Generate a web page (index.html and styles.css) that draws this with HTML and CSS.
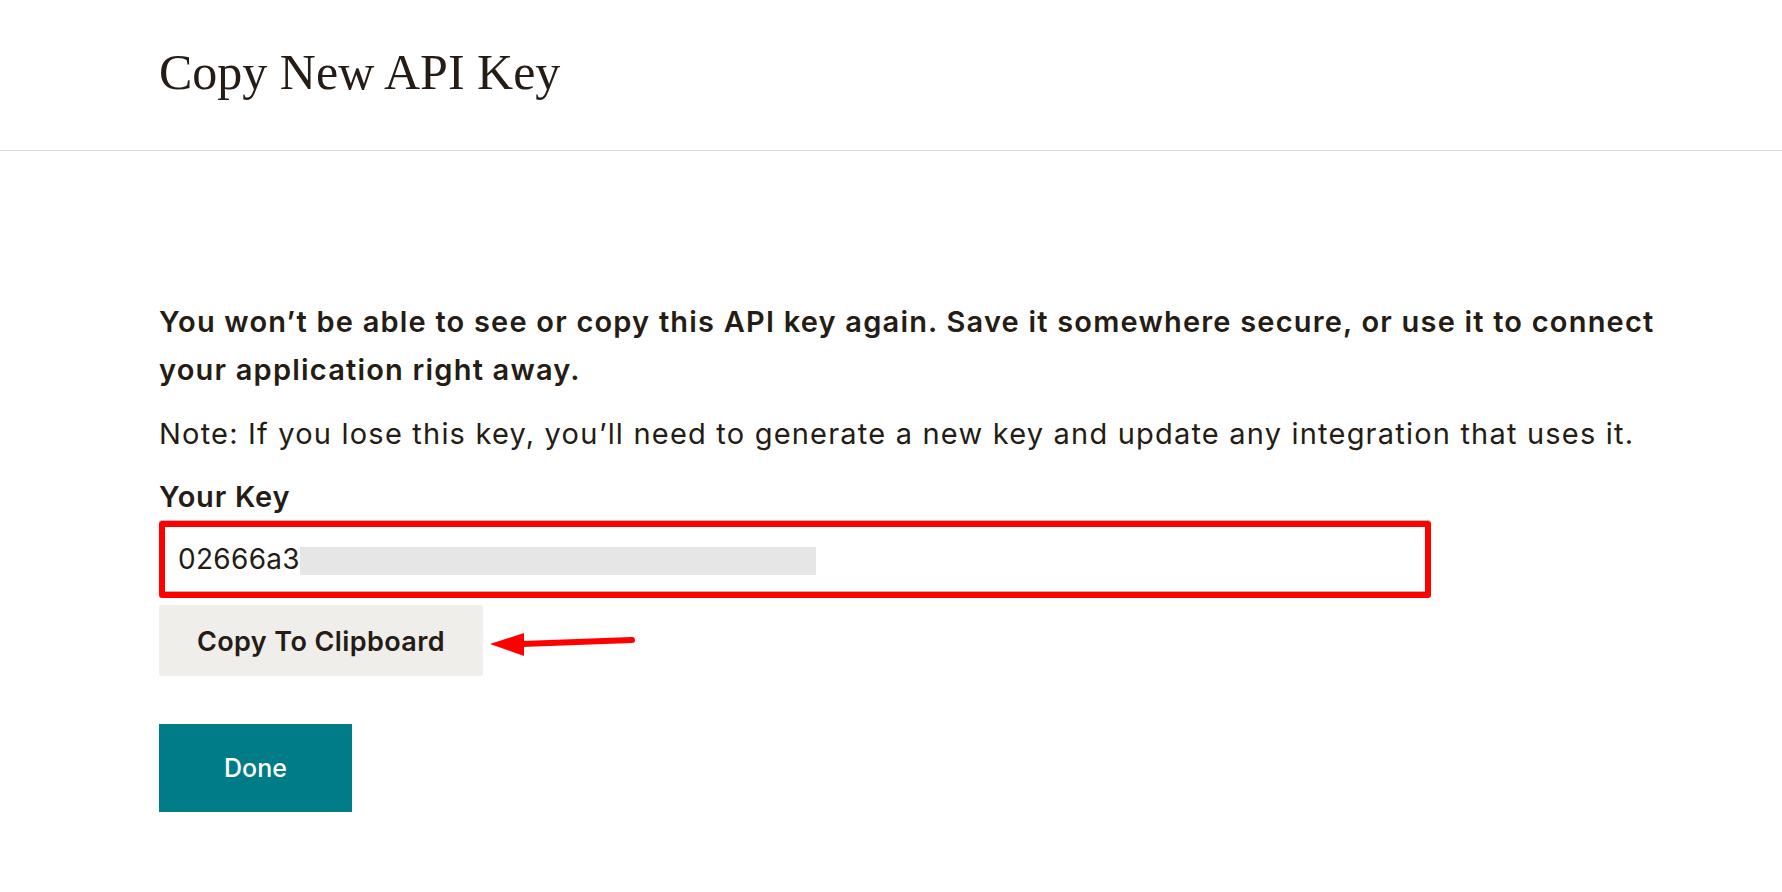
FILE: index.html
```html
<!DOCTYPE html>
<html lang="en">
<head>
<meta charset="utf-8">
<title>Copy New API Key</title>
<link rel="stylesheet" href="styles.css">
</head>
<body>
  <header class="page-header">
    <h1 class="page-title">Copy New API Key</h1>
  </header>
  <main class="content">
    <p class="warning">You won’t be able to see or copy this API key again. Save it somewhere secure, or use it to connect your application right away.</p>
    <p class="note">Note: If you lose this key, you’ll need to generate a new key and update any integration that uses it.</p>
    <label class="key-label">Your Key</label>
    <div class="key-field">
      <span class="key-text">02666a3</span><span class="key-mask"></span>
    </div>
    <div class="copy-row">
      <button class="btn-copy" type="button">Copy To Clipboard</button>
      <svg class="arrow" width="150" height="26" viewBox="0 0 150 26" aria-hidden="true">
        <polygon points="0,12 34,1 34,24" fill="#ff0000"/>
        <line x1="32" y1="12" x2="142" y2="8" stroke="#ff0000" stroke-width="6" stroke-linecap="round"/>
      </svg>
    </div>
    <button class="btn-done" type="button">Done</button>
  </main>
</body>
</html>
```
FILE: styles.css
```css
html, body {
  margin: 0;
  padding: 0;
  background: #ffffff;
}

body {
  font-family: "Inter", "Liberation Sans", sans-serif;
  color: #241c15;
}

.page-header {
  height: 151px;
  border-bottom: 1px solid #dcdcdc;
  padding: 42px 0 0 159px;
  box-sizing: border-box;
}

.page-title {
  margin: 0;
  font-family: "Liberation Serif", "DejaVu Serif", serif;
  font-weight: normal;
  font-size: 50px;
  line-height: 60px;
  color: #241c15;
}

.content {
  padding: 147px 0 0 159px;
  display: flex;
  flex-direction: column;
  align-items: flex-start;
}

.warning {
  margin: 0;
  width: 1530px;
  font-size: 29px;
  font-weight: 600;
  letter-spacing: 1.2px;
  line-height: 48px;
}

.note {
  margin: 16px 0 0;
  font-size: 29px;
  font-weight: 400;
  letter-spacing: 1.2px;
  line-height: 48px;
}

.key-label {
  margin-top: 19px;
  font-size: 29px;
  font-weight: 600;
  letter-spacing: 0.8px;
  line-height: 40px;
}

.key-field {
  margin-top: 4px;
  width: 1272px;
  height: 77px;
  box-sizing: border-box;
  border: 6px solid #ff0000;
  border-radius: 3px;
  box-shadow: 0 -1px 0 #b9b9b9, inset 0 -1px 0 #b9b9b9;
  padding-left: 13px;
  display: flex;
  align-items: center;
  font-size: 28px;
  letter-spacing: 0.3px;
  line-height: 65px;
}

.key-mask {
  display: inline-block;
  width: 516px;
  height: 28px;
  margin-top: 2px;
  background: #e6e6e6;
}

.copy-row {
  margin-top: 7px;
  display: flex;
  align-items: flex-start;
  gap: 7px;
}

.btn-copy {
  width: 324px;
  height: 71px;
  border: none;
  border-radius: 3px;
  background: #efeeea;
  font-family: "Inter", "Liberation Sans", sans-serif;
  font-size: 27px;
  font-weight: 600;
  letter-spacing: 0.4px;
  color: #241c15;
  padding: 2px 0 0;
}

.arrow {
  margin-top: 27px;
}

.btn-done {
  margin-top: 48px;
  width: 193px;
  height: 88px;
  border: none;
  border-radius: 0;
  background: #007c89;
  color: #ffffff;
  font-family: "Inter", "Liberation Sans", sans-serif;
  font-size: 25px;
  font-weight: 500;
  padding: 0;
}
```
